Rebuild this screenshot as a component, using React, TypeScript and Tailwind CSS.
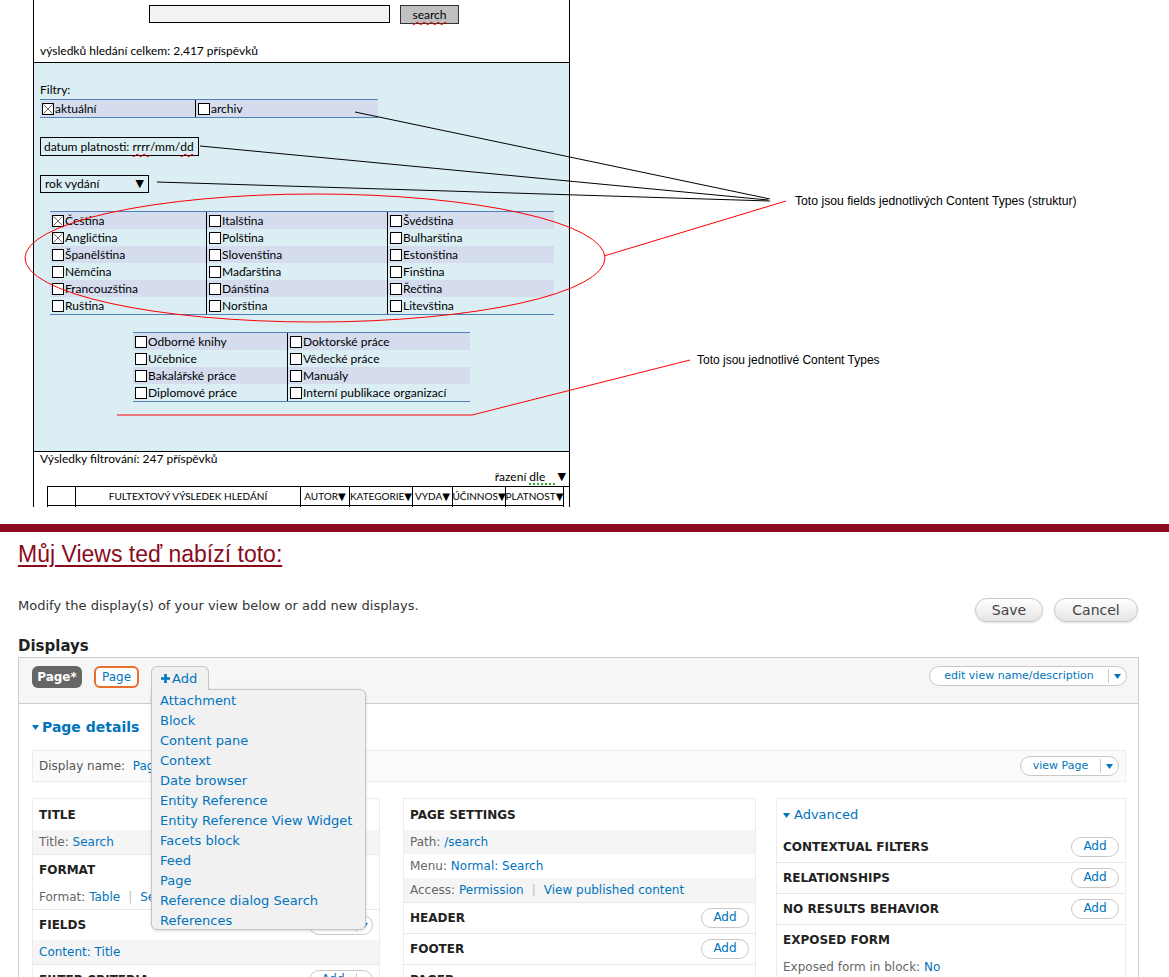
import type { ReactNode } from 'react';

const wf = "font-['Lato',sans-serif] text-[12px] text-black";
const dr = "font-['DejaVu_Sans',sans-serif]";
const link = 'text-[#0074bd]';

function Check({ on }: { on?: boolean }) {
    return (
        <span className="inline-block w-[12px] h-[12px] border border-black bg-white shrink-0">
            {on && (
                <svg viewBox="0 0 10 10" className="block w-full h-full">
                    <path d="M0.5 0.5L9.5 9.5M9.5 0.5L0.5 9.5" stroke="#555" strokeWidth="0.9" />
                </svg>
            )}
        </span>
    );
}

function Cell({ label, on, shade, last }: { label: string; on?: boolean; shade?: boolean; last?: boolean }) {
    return (
        <div className={`flex items-center h-[17px] pl-[2px] gap-[1px] ${shade ? 'bg-[#d4dcee]' : ''} ${last ? '' : 'border-r border-black'}`}>
            <Check on={on} />
            <span className="leading-none whitespace-nowrap">{label}</span>
        </div>
    );
}

const langs = [
    ['Čeština', 'Italština', 'Švédština'],
    ['Angličtina', 'Polština', 'Bulharština'],
    ['Španělština', 'Slovenština', 'Estonština'],
    ['Němčina', 'Maďarština', 'Finština'],
    ['Francouzština', 'Dánština', 'Řečtina'],
    ['Ruština', 'Norština', 'Litevština'],
];

const types = [
    ['Odborné knihy', 'Doktorské práce'],
    ['Učebnice', 'Vědecké práce'],
    ['Bakalářské práce', 'Manuály'],
    ['Diplomové práce', 'Interní publikace organizací'],
];

const tableCols = [
    { w: 'w-[28px]', label: '' },
    { w: 'w-[225px]', label: 'FULTEXTOVÝ VÝSLEDEK HLEDÁNÍ' },
    { w: 'w-[49px]', label: 'AUTOR▼' },
    { w: 'w-[63px]', label: 'KATEGORIE▼' },
    { w: 'w-[40px]', label: 'VYDA▼' },
    { w: 'w-[53px]', label: 'ÚČINNOS▼' },
    { w: 'w-[58px]', label: 'PLATNOST▼' },
];

function Wireframe() {
    return (
        <div className={`${wf} ml-[33px] w-[537px] border-x border-black flex flex-col`}>
            {/* search */}
            <div className="h-[63px] border-b border-black flex flex-col">
                <div className="flex pl-[115px] pt-[5px]">
                    <div className="w-[241px] h-[18px] border border-black bg-[#f2f2f2]" />
                    <div className="ml-[10px] w-[59px] h-[19px] border border-[#333] bg-[#c0c0c0] flex items-center justify-center text-[12px]">
                        <span className="underline decoration-wavy decoration-[#e00] decoration-1 underline-offset-2">search</span>
                    </div>
                </div>
                <div className="pl-[6px] mt-[20px] leading-[14px]">výsledků hledání celkem: 2,417 příspěvků</div>
            </div>

            {/* filters */}
            <div className="h-[389px] bg-[#dbeef4] border-b border-black flex flex-col">
                <div className="pl-[6px] pt-[20px] leading-[14px]">Filtry:</div>
                <div className="ml-[6px] mt-[2px] w-[338px] grid grid-cols-[156px_182px] border-y border-[#4f81bd] bg-[#d4dcee]">
                    <Cell label="aktuální" on />
                    <Cell label="archiv" last />
                </div>
                <div className="ml-[6px] mt-[19px] w-[159px] h-[19px] border border-black flex items-center pl-[3px]">
                    datum platnosti:&nbsp;
                    <span className="underline decoration-wavy decoration-[#e00] decoration-1 underline-offset-2">rrrr</span>/mm/
                    <span className="underline decoration-wavy decoration-[#e00] decoration-1 underline-offset-2">dd</span>
                </div>
                <div className="ml-[6px] mt-[19px] w-[109px] h-[18px] border border-black flex items-center justify-between pl-[4px] pr-[4px]">
                    <span>rok vydání</span>
                    <span className="font-['DejaVu_Sans',sans-serif] text-[11px]">▼</span>
                </div>
                <div className="ml-[16px] mt-[18px] w-[504px] grid grid-cols-[157px_181px_166px] border-y border-[#4f81bd]">
                    {langs.flatMap((row, r) =>
                        row.map((l, c) => <Cell key={l} label={l} on={c === 0 && r < 2} shade={r % 2 === 0} last={c === 2} />)
                    )}
                </div>
                <div className="ml-[99px] mt-[17px] w-[337px] grid grid-cols-[155px_182px] border-y border-[#4f81bd]">
                    {types.flatMap((row, r) =>
                        row.map((l, c) => <Cell key={l} label={l} shade={r % 2 === 0} last={c === 1} />)
                    )}
                </div>
            </div>

            {/* results */}
            <div className="h-[55px] overflow-hidden flex flex-col">
                <div className="pl-[6px] leading-[14px]">Výsledky filtrování: 247 příspěvků</div>
                <div className="self-end pr-[3px] mt-[4px] leading-[14px] flex items-center">
                    řazení&nbsp;
                    <span className="underline decoration-dotted decoration-[#3a3] decoration-2 underline-offset-2">dle&nbsp;&nbsp;&nbsp;&nbsp;</span>
                    <span className="font-['DejaVu_Sans',sans-serif] text-[11px]">▼</span>
                </div>
                <div className="ml-[13px] mt-[2px] flex border-t border-l border-black">
                    {tableCols.map((c, i) => (
                        <div key={i} className={`${c.w} shrink-0 border-r border-black flex flex-col`}>
                            <div className="h-[19px] border-b border-black flex items-center justify-center text-[10px] whitespace-nowrap overflow-hidden">
                                {c.label.replace('▼', '')}
                                {c.label.includes('▼') && <span className="font-['DejaVu_Sans',sans-serif] text-[10px]">▼</span>}
                            </div>
                            <div className="h-[10px]" />
                        </div>
                    ))}
                </div>
            </div>
        </div>
    );
}

function Annotations() {
    return (
        <>
            <svg className="absolute left-0 top-0 pointer-events-none" width="1169" height="520" viewBox="0 0 1169 520">
                <ellipse cx="315" cy="258" rx="290" ry="64" fill="none" stroke="#ff0000" strokeWidth="1" />
                <g stroke="#000" strokeWidth="1" fill="none">
                    <line x1="355" y1="112" x2="770" y2="199" />
                    <line x1="200" y1="146" x2="768" y2="200" />
                    <line x1="157" y1="182" x2="770" y2="201" />
                </g>
                <g stroke="#ff0000" strokeWidth="1" fill="none">
                    <line x1="604" y1="256" x2="786" y2="201" />
                    <polyline points="117,415 472,415 690,360" />
                </g>
            </svg>
            <div className="absolute left-[795px] top-[194px] font-['Liberation_Sans',sans-serif] text-[12.2px] leading-[14px] text-black whitespace-nowrap">
                Toto jsou fields jednotlivých Content Types (struktur)
            </div>
            <div className="absolute left-[697px] top-[353px] font-['Liberation_Sans',sans-serif] text-[12px] leading-[14px] text-black whitespace-nowrap">
                Toto jsou jednotlivé Content Types
            </div>
        </>
    );
}

function Caret({ className = '' }: { className?: string }) {
    return (
        <svg width="7" height="5" viewBox="0 0 7 5" className={className}>
            <path d="M0 0H7L3.5 5Z" fill="#0074bd" />
        </svg>
    );
}

function AddBtn({ split }: { split?: boolean }) {
    if (split) {
        return (
            <span className="flex items-center h-[20px] w-[64px] rounded-full border border-[#c8c8c8] bg-white text-[12px]">
                <span className={`${link} flex-1 text-center leading-none pb-[2px]`}>Add</span>
                <span className="h-[14px] border-l border-[#ccc] w-[16px] flex items-center justify-center">
                    <Caret />
                </span>
            </span>
        );
    }
    return (
        <span className={`flex items-center justify-center h-[20px] w-[48px] rounded-full border border-[#c8c8c8] bg-white text-[12px] leading-none pb-[2px] ${link}`}>
            Add
        </span>
    );
}

function Head({ title, btn, first }: { title: string; btn?: ReactNode; first?: boolean }) {
    return (
        <div className={`flex items-center justify-between h-[31px] px-[6px] ${first ? '' : 'border-t border-[#e8e8e8]'}`}>
            <span className="font-bold text-[12px] text-[#222] whitespace-nowrap">{title}</span>
            {btn}
        </div>
    );
}

function Row({ shade, children }: { shade?: boolean; children: ReactNode }) {
    return (
        <div className={`h-[24px] flex items-center px-[6px] text-[12px] text-[#666] whitespace-nowrap ${shade ? 'bg-[#f5f5f5]' : ''}`}>
            {children}
        </div>
    );
}

function L({ children }: { children: ReactNode }) {
    return <span className={link}>{children}</span>;
}

const menuItems = [
    'Attachment',
    'Block',
    'Content pane',
    'Context',
    'Date browser',
    'Entity Reference',
    'Entity Reference View Widget',
    'Facets block',
    'Feed',
    'Page',
    'Reference dialog Search',
    'References',
];

function Pill({ label, w }: { label: string; w: string }) {
    return (
        <span className={`flex items-center h-[20px] ${w} rounded-full border border-[#c8c8c8] bg-white text-[11px]`}>
            <span className={`${link} flex-1 text-center leading-none pb-[1px]`}>{label}</span>
            <span className="h-[14px] border-l border-[#ccc] w-[18px] flex items-center justify-center">
                <Caret />
            </span>
        </span>
    );
}

function ViewsUI() {
    return (
        <div className={`${dr} text-[#333]`}>
            <div className="mt-[17px] h-[8px] bg-[#8a0a1c]" />
            <h1 className="mt-[8px] ml-[18px] font-['Liberation_Sans',sans-serif] text-[23px] leading-[28px] text-[#8a0a1c] underline decoration-2 underline-offset-[3px]">
                Můj Views teď nabízí toto:
            </h1>
            <div className="mt-[30px] flex items-start justify-between pl-[18px] pr-[31px]">
                <p className="text-[13px] leading-[16px] text-[#333]">Modify the display(s) of your view below or add new displays.</p>
                <div className="flex gap-[11px]">
                    <button className="w-[68px] h-[24px] rounded-full border border-[#c8c8c8] bg-gradient-to-b from-[#fefefe] to-[#e6e6e6] text-[14px] text-[#444] shadow-[0_1px_2px_rgba(0,0,0,0.12)]">
                        Save
                    </button>
                    <button className="w-[84px] h-[24px] rounded-full border border-[#c8c8c8] bg-gradient-to-b from-[#fefefe] to-[#e6e6e6] text-[14px] text-[#444] shadow-[0_1px_2px_rgba(0,0,0,0.12)]">
                        Cancel
                    </button>
                </div>
            </div>
            <h2 className="mt-[15px] ml-[18px] font-bold text-[15px] leading-[18px] text-[#222]">Displays</h2>

            <div className="mt-[2px] ml-[18px] w-[1121px] h-[400px] border border-[#ccc]">
                {/* display tabs */}
                <div className="h-[46px] bg-[#f6f6f6] border-b border-[#ccc] flex items-start pt-[8px] pl-[13px] pr-[11px]">
                    <span className="h-[22px] w-[50px] rounded-[6px] bg-[#666] text-white font-bold text-[12px] flex items-center justify-center">
                        Page*
                    </span>
                    <span className={`ml-[12px] h-[22px] w-[45px] rounded-[6px] border-2 border-[#e8702c] bg-white text-[12px] flex items-center justify-center ${link}`}>
                        Page
                    </span>
                    <div className="relative ml-[12px]">
                        <span className={`relative z-20 h-[24px] w-[58px] rounded-t-[6px] border border-b-0 border-[#c4c4c4] bg-[#f0f0f0] text-[13px] flex items-center pl-[9px] gap-[2px] ${link}`}>
                            <svg width="9" height="9" viewBox="0 0 9 9">
                                <path d="M3.2 0H5.8V3.2H9V5.8H5.8V9H3.2V5.8H0V3.2H3.2Z" fill="#0074bd" />
                            </svg>
                            Add
                        </span>
                        <div className="absolute z-10 left-0 top-[23px] w-[215px] h-[241px] bg-[#f1f1f1] border border-[#c4c4c4] rounded-b-[6px] rounded-tr-[6px] shadow-[0_1px_3px_rgba(0,0,0,0.15)] pt-[1px]">
                            {menuItems.map(m => (
                                <div key={m} className={`pl-[8px] text-[13px] leading-[20px] whitespace-nowrap ${link}`}>
                                    {m}
                                </div>
                            ))}
                        </div>
                    </div>
                    <div className="ml-auto">
                        <Pill label="edit view name/description" w="w-[198px]" />
                    </div>
                </div>

                {/* page details */}
                <div className="px-[13px] pr-[12px]">
                    <div className={`mt-[13px] flex items-center gap-[3px] font-bold text-[14px] leading-[20px] ${link}`}>
                        <Caret />
                        Page details
                    </div>
                    <div className="mt-[13px] h-[32px] border border-[#ececec] bg-[#fbfbfb] flex items-center justify-between pl-[6px] pr-[6px] text-[12px] text-[#555]">
                        <span>
                            Display name:&nbsp; <L>Page</L>
                        </span>
                        <Pill label="view Page" w="w-[99px]" />
                    </div>

                    <div className="mt-[16px] flex items-start">
                        <div className="w-[348px] border border-[#ececec]">
                            <Head title="TITLE" first />
                            <Row shade>
                                Title:&nbsp; <L>Search</L>
                            </Row>
                            <Head title="FORMAT" />
                            <Row>
                                Format:&nbsp; <L>Table</L>
                                <span className="mx-[8px] text-[#bbb]">|</span>
                                <L>Settings</L>
                            </Row>
                            <Head title="FIELDS" btn={<AddBtn split />} />
                            <Row shade>
                                <L>Content: Title</L>
                            </Row>
                            <Head title="FILTER CRITERIA" btn={<AddBtn split />} />
                        </div>

                        <div className="ml-[23px] w-[353px] border border-[#ececec]">
                            <Head title="PAGE SETTINGS" first />
                            <Row shade>
                                Path:&nbsp; <L>/search</L>
                            </Row>
                            <Row>
                                Menu:&nbsp; <L>Normal: Search</L>
                            </Row>
                            <Row shade>
                                Access:&nbsp; <L>Permission</L>
                                <span className="mx-[8px] text-[#bbb]">|</span>
                                <L>View published content</L>
                            </Row>
                            <Head title="HEADER" btn={<AddBtn />} />
                            <Head title="FOOTER" btn={<AddBtn />} />
                            <Head title="PAGER" />
                        </div>

                        <div className="ml-[20px] w-[350px] border border-[#ececec]">
                            <div className={`h-[32px] flex items-center gap-[4px] px-[6px] text-[13px] ${link}`}>
                                <Caret />
                                Advanced
                            </div>
                            <Head title="CONTEXTUAL FILTERS" btn={<AddBtn />} first />
                            <Head title="RELATIONSHIPS" btn={<AddBtn />} />
                            <Head title="NO RESULTS BEHAVIOR" btn={<AddBtn />} />
                            <Head title="EXPOSED FORM" />
                            <Row>
                                Exposed form in block:&nbsp; <L>No</L>
                            </Row>
                        </div>
                    </div>
                </div>
            </div>
        </div>
    );
}

export default function App() {
    return (
        <div className="relative w-[1169px] h-[977px] overflow-hidden bg-white">
            <Wireframe />
            <ViewsUI />
            <Annotations />
        </div>
    );
}
